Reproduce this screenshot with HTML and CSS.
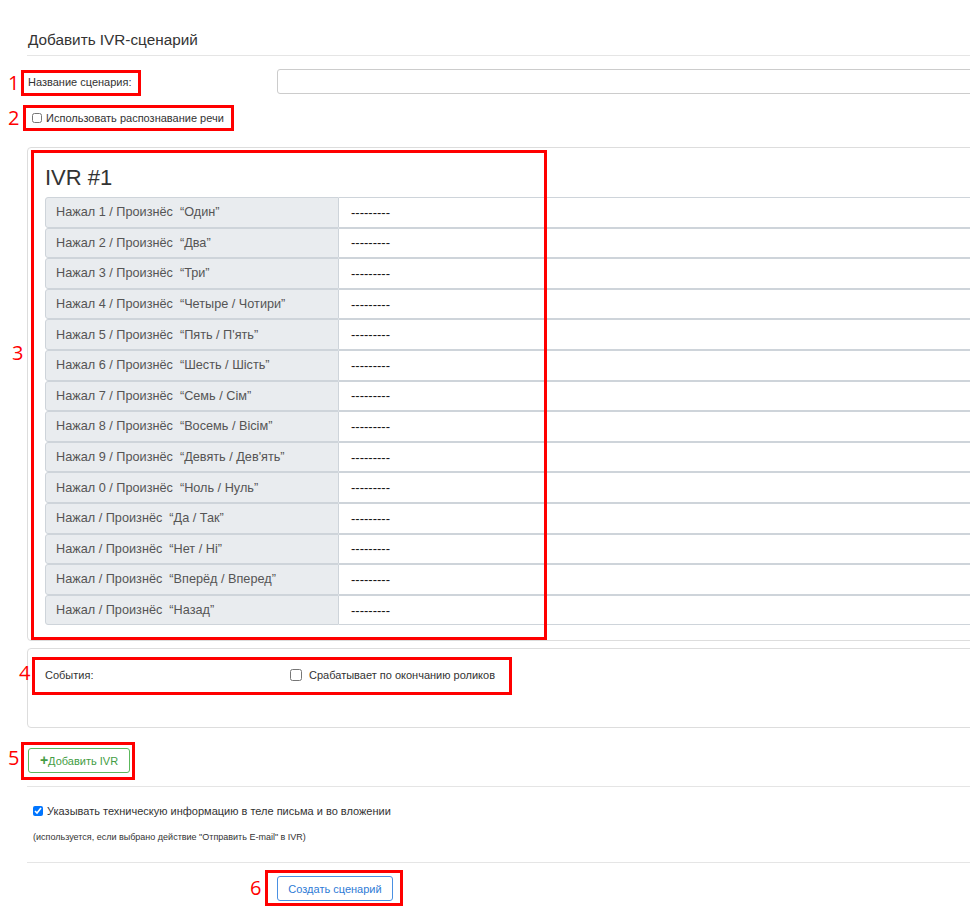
FILE: index.html
```html
<!DOCTYPE html>
<html lang="ru">
<head>
    <meta charset="UTF-8">
    <title>Добавить IVR-сценарий</title>
    <link rel="stylesheet" href="styles.css">
</head>
<body>
    <div class="page">
        <h3 class="title">Добавить IVR-сценарий</h3>

        <div class="name-row">
            <label class="name-label">Название сценария:</label>
            <input class="name-input" type="text">
        </div>

        <div class="check-row">
            <label><input type="checkbox"> Использовать распознавание речи</label>
        </div>

        <div class="panel ivr">
            <h2 class="ivr-title">IVR #1</h2>
            <div class="ivr-table">
                <div class="row"><span class="key">Нажал 1 / Произнёс&nbsp; “Один”</span><span class="val">---------</span></div>
                <div class="row"><span class="key">Нажал 2 / Произнёс&nbsp; “Два”</span><span class="val">---------</span></div>
                <div class="row"><span class="key">Нажал 3 / Произнёс&nbsp; “Три”</span><span class="val">---------</span></div>
                <div class="row"><span class="key">Нажал 4 / Произнёс&nbsp; “Четыре / Чотири”</span><span class="val">---------</span></div>
                <div class="row"><span class="key">Нажал 5 / Произнёс&nbsp; “Пять / П'ять”</span><span class="val">---------</span></div>
                <div class="row"><span class="key">Нажал 6 / Произнёс&nbsp; “Шесть / Шість”</span><span class="val">---------</span></div>
                <div class="row"><span class="key">Нажал 7 / Произнёс&nbsp; “Семь / Сім”</span><span class="val">---------</span></div>
                <div class="row"><span class="key">Нажал 8 / Произнёс&nbsp; “Восемь / Вісім”</span><span class="val">---------</span></div>
                <div class="row"><span class="key">Нажал 9 / Произнёс&nbsp; “Девять / Дев'ять”</span><span class="val">---------</span></div>
                <div class="row"><span class="key">Нажал 0 / Произнёс&nbsp; “Ноль / Нуль”</span><span class="val">---------</span></div>
                <div class="row"><span class="key">Нажал / Произнёс&nbsp; “Да / Так”</span><span class="val">---------</span></div>
                <div class="row"><span class="key">Нажал / Произнёс&nbsp; “Нет / Ні”</span><span class="val">---------</span></div>
                <div class="row"><span class="key">Нажал / Произнёс&nbsp; “Вперёд / Вперед”</span><span class="val">---------</span></div>
                <div class="row"><span class="key">Нажал / Произнёс&nbsp; “Назад”</span><span class="val">---------</span></div>
            </div>
        </div>

        <div class="panel events">
            <div class="events-row">
                <span class="events-label">События:</span>
                <label class="events-check"><input type="checkbox"> Срабатывает по окончанию роликов</label>
            </div>
        </div>

        <button class="btn btn-green"><span class="plus">+</span>Добавить IVR</button>

        <div class="tech">
            <label><input type="checkbox" checked> Указывать техническую информацию в теле письма и во вложении</label>
            <p class="hint">(используется, если выбрано действие "Отправить E-mail" в IVR)</p>
        </div>

        <div class="submit-row">
            <button class="btn btn-blue">Создать сценарий</button>
        </div>
    </div>

    <!-- пометки поверх скриншота -->
    <div class="mark box1"></div>
    <div class="mark box2"></div>
    <div class="mark box3"></div>
    <div class="mark box4"></div>
    <div class="mark box5"></div>
    <div class="mark box6"></div>
    <span class="num n1">1</span>
    <span class="num n2">2</span>
    <span class="num n3">3</span>
    <span class="num n4">4</span>
    <span class="num n5">5</span>
    <span class="num n6">6</span>
</body>
</html>
```

FILE: styles.css
```css
body {
    margin: 0;
    min-height: 100vh;
    background: #fff;
    font-family: "Liberation Sans", Arial, sans-serif;
    color: #333;
    overflow: hidden;
    position: relative;
}
.page {
    padding-left: 27px;
    margin-right: -30px;
}
.title {
    margin: 0;
    padding: 30px 0 5px 1px;
    font-size: 15.3px;
    font-weight: normal;
    line-height: 20px;
    border-bottom: 1px solid #e5e5e5;
}
.name-row {
    display: flex;
    align-items: center;
    margin-top: 13px;
    height: 25px;
}
.name-label {
    width: 249px;
    padding-left: 1px;
    font-size: 11px;
}
.name-input {
    flex: 1;
    height: 25px;
    box-sizing: border-box;
    border: 1px solid #ccc;
    border-radius: 3px;
    margin: 0;
}
.check-row {
    margin-top: 11px;
    height: 26px;
    display: flex;
    align-items: center;
    padding-left: 5px;
    font-size: 11px;
}
.check-row input,
.tech input {
    width: 10px;
    height: 10px;
    margin: 0 1px 0 0;
    vertical-align: -1px;
}
.panel {
    border: 1px solid #ddd;
    border-radius: 4px;
}
.ivr {
    margin-top: 16px;
    padding: 0 0 15px 17px;
}
.ivr-title {
    margin: 0;
    font-size: 22px;
    font-weight: normal;
    line-height: 26px;
    padding-top: 17px;
    padding-bottom: 6px;
}
.ivr-table {
    display: flex;
    flex-direction: column;
}
.row {
    display: flex;
    height: 30.6px;
    box-sizing: border-box;
    font-size: 12.7px;
}
.key {
    width: 294px;
    box-sizing: border-box;
    background: #e9ecef;
    border: 1px solid #ced4da;
    border-radius: 3px 0 0 3px;
    color: #555;
    padding-left: 10px;
    display: flex;
    align-items: center;
}
.val {
    flex: 1;
    border: 1px solid #ced4da;
    border-left: none;
    padding-left: 12px;
    display: flex;
    align-items: center;
    color: #111;
    font-size: 13px;
}
.events {
    margin-top: 7px;
    height: 78px;
    padding: 0 0 0 17px;
}
.events-row {
    display: flex;
    align-items: center;
    height: 52px;
    font-size: 11px;
}
.events-label {
    width: 245px;
}
.events-check input {
    width: 12px;
    height: 12px;
    margin: 0 4px 0 0;
    vertical-align: -2px;
}
.btn {
    font-family: "Liberation Sans", Arial, sans-serif;
    font-size: 11px;
    background: #fff;
    border-radius: 3px;
    height: 25px;
    cursor: pointer;
}
.btn-green {
    margin-top: 20px;
    margin-left: 1px;
    width: 102px;
    border: 1px solid #5cb85c;
    color: #449d44;
    padding: 0;
}
.plus {
    font-weight: bold;
    font-size: 14px;
    line-height: 10px;
}
.tech {
    margin-top: 13px;
    border-top: 1px solid #e5e5e5;
    border-bottom: 1px solid #e5e5e5;
    padding: 18px 0 0 6px;
    height: 57px;
    font-size: 11px;
}
.hint {
    margin: 15px 0 0 0;
    font-size: 9px;
}
.submit-row {
    padding: 13px 0 0 250px;
}
.btn-blue {
    width: 116px;
    border: 1px solid #4a90e2;
    color: #2e7bd6;
    padding: 0;
}
.mark {
    position: absolute;
    border: 3px solid #ff0000;
    box-sizing: border-box;
}
.box1 { left: 21px; top: 70px; width: 120px; height: 26px; }
.box2 { left: 23px; top: 105px; width: 211px; height: 26px; }
.box3 { left: 31px; top: 150px; width: 516px; height: 490px; }
.box4 { left: 32px; top: 657px; width: 480px; height: 38px; }
.box5 { left: 21px; top: 742px; width: 114px; height: 38px; }
.box6 { left: 265px; top: 870px; width: 138px; height: 36px; }
.num {
    position: absolute;
    font-family: "Open Sans", sans-serif;
    font-size: 20px;
    line-height: 24px;
    color: #ff0000;
}
.n1 { left: 8px; top: 71px; }
.n2 { left: 8px; top: 106px; }
.n3 { left: 12px; top: 341px; }
.n4 { left: 19px; top: 661px; }
.n5 { left: 8px; top: 746px; }
.n6 { left: 250px; top: 876px; }
```
